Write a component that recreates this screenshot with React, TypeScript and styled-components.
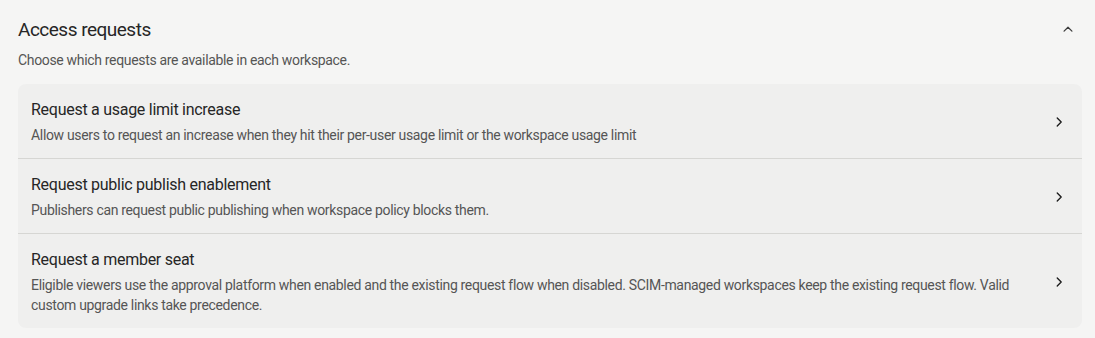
import React from "react";
import styled, { createGlobalStyle } from "styled-components";

const GlobalStyle = createGlobalStyle`
  body {
    margin: 0;
    background: #f5f5f4;
    font-family: Roboto, "Noto Sans", sans-serif;
    -webkit-font-smoothing: antialiased;
  }
`;

interface Request {
  title: string;
  description: string;
}

const requests: Request[] = [
  {
    title: "Request a usage limit increase",
    description:
      "Allow users to request an increase when they hit their per-user usage limit or the workspace usage limit",
  },
  {
    title: "Request public publish enablement",
    description:
      "Publishers can request public publishing when workspace policy blocks them.",
  },
  {
    title: "Request a member seat",
    description:
      "Eligible viewers use the approval platform when enabled and the existing request flow when disabled. SCIM-managed workspaces keep the existing request flow. Valid custom upgrade links take precedence.",
  },
];

function ChevronUp() {
  return (
    <svg width="14" height="14" viewBox="0 0 16 16" fill="none">
      <path
        d="M3.5 10.5L8 6l4.5 4.5"
        stroke="#3a3a3a"
        strokeWidth="1.4"
        strokeLinecap="round"
        strokeLinejoin="round"
      />
    </svg>
  );
}

function ChevronRight() {
  return (
    <svg width="14" height="14" viewBox="0 0 16 16" fill="none">
      <path
        d="M6 3.5L10.5 8 6 12.5"
        stroke="#1f1f1f"
        strokeWidth="1.6"
        strokeLinecap="round"
        strokeLinejoin="round"
      />
    </svg>
  );
}

export default function App() {
  return (
    <>
      <GlobalStyle />
      <Section>
        <Header>
          <Heading>Access requests</Heading>
          <CollapseButton type="button" aria-label="Collapse">
            <ChevronUp />
          </CollapseButton>
        </Header>
        <Subtitle>Choose which requests are available in each workspace.</Subtitle>
        <Card>
          {requests.map((r) => (
            <Row key={r.title}>
              <RowText>
                <RowTitle>{r.title}</RowTitle>
                <RowDesc>{r.description}</RowDesc>
              </RowText>
              <ChevronRight />
            </Row>
          ))}
        </Card>
      </Section>
    </>
  );
}

const Section = styled.section`
  padding: 16px 13px 10px 18px;
`;
const Header = styled.div`
  display: flex;
  align-items: center;
  justify-content: space-between;
  height: 26px;
`;
const Heading = styled.h2`
  margin: 0;
  font-size: 19px;
  font-weight: 400;
  letter-spacing: -0.5px;
  color: #262626;
`;
const CollapseButton = styled.button`
  border: none;
  background: none;
  padding: 0;
  margin-right: 6px;
  width: 16px;
  height: 16px;
  display: flex;
  align-items: center;
  justify-content: center;
  cursor: pointer;
`;
const Subtitle = styled.p`
  margin: 8px 0 0;
  font-size: 14px;
  line-height: 20px;
  letter-spacing: -0.33px;
  color: #555555;
`;
const Card = styled.div`
  margin-top: 14px;
  background: #efefee;
  border-radius: 8px;
  overflow: hidden;
`;
const Row = styled.div`
  display: flex;
  align-items: center;
  gap: 36px;
  padding: 15px 16px 13px 13px;
  & + & {
    border-top: 1px solid #d6d6d3;
  }
`;
const RowText = styled.div`
  flex: 1;
  display: flex;
  flex-direction: column;
  gap: 4px;
`;
const RowTitle = styled.div`
  font-size: 16px;
  line-height: 22px;
  letter-spacing: -0.27px;
  color: #262626;
`;
const RowDesc = styled.div`
  font-size: 14px;
  line-height: 20px;
  letter-spacing: -0.33px;
  color: #555555;
`;
